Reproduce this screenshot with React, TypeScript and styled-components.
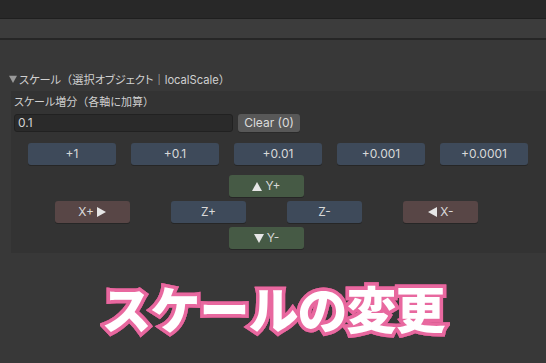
import React from "react";
import styled, { createGlobalStyle } from "styled-components";

const Global = createGlobalStyle`
  html, body { margin: 0; padding: 0; }
  body {
    width: 546px; height: 363px; overflow: hidden;
    background: #383838;
    font-family: "Inter", "Noto Sans CJK JP", sans-serif;
  }
`;

const Page = styled.div`
  width: 546px; height: 363px;
  display: flex; flex-direction: column;
`;

const TopBar = styled.div`
  height: 18px; background: #282828; border-bottom: 1px solid #1f1f1f;
`;

const Band = styled.div`
  height: 19px; background: #3c3c3c; border-bottom: 2px solid #262626;
`;

const Foldout = styled.div`
  margin-top: 31px; height: 16px; display: flex; align-items: center;
  padding-left: 9px; gap: 2px;
  color: #d0d0d0; font-size: 11.2px;
  font-feature-settings: "palt";
`;

const Bracket = styled.span`
  font-feature-settings: normal;
`;

const Panel = styled.div`
  margin-top: 4px; margin-left: 11px; height: 162px;
  background: #333333; display: flex; flex-direction: column;
  padding: 3px 0 0 3px; box-sizing: border-box;
`;

const Label = styled.div`
  height: 16px; line-height: 16px; color: #d0d0d0; font-size: 11px;
  font-feature-settings: "palt";
`;

const FieldRow = styled.div`
  margin-top: 3px; display: flex; align-items: center; gap: 5px;
`;

const Field = styled.div`
  width: 219px; height: 18px; box-sizing: border-box;
  background: #2a2a2a; border: 1px solid #212121; border-radius: 3px;
  color: #d4d4d4; font-size: 12px; line-height: 16px; padding-left: 3px;
`;

const SmallButton = styled.div`
  width: 62px; height: 18px; margin-top: 1px; box-sizing: border-box;
  background: #585858; border-radius: 3px; color: #dcdcdc;
  font-size: 12px; line-height: 18px; text-align: center;
  box-shadow: 0 1px 0 #2a2a2a;
`;

const StepRow = styled.div`
  margin-top: 11px; margin-left: 14px; display: flex; gap: 15px;
`;

type Tone = "blue" | "green" | "red";
const tones: Record<Tone, string> = {
  blue: "#3e4a5a",
  green: "#465a45",
  red: "#584646",
};

const Btn = styled.div<{ $tone: Tone; $w: number }>`
  width: ${(p) => p.$w}px; height: 22px; box-sizing: border-box;
  background: ${(p) => tones[p.$tone]}; border-radius: 3px;
  box-shadow: 0 1px 0 #262626;
  color: #d8d8d8; font-size: 12px; line-height: 22px; text-align: center;
  display: flex; align-items: center; justify-content: center; gap: 3px;
`;

const Cross = styled.div`
  margin-top: 10px; margin-left: 41px; width: 423px;
  display: flex; flex-direction: column; align-items: center; gap: 4px;
`;

const CrossRow = styled.div`
  width: 100%; display: flex; justify-content: space-between;
`;

const Tri = ({ dir, size = 10, color = "#e6e6e6" }: { dir: "up" | "down" | "left" | "right"; size?: number; color?: string }) => {
  const pts = {
    up: "0,10 5,1 10,10",
    down: "0,1 10,1 5,10",
    left: "10,0 10,10 1,5",
    right: "0,0 0,10 9,5",
  }[dir];
  return (
    <svg width={size} height={size} viewBox="0 0 10 10">
      <polygon points={pts} fill={color} />
    </svg>
  );
};

const Caption = styled.div`
  margin-top: 26px; text-align: center;
  font-family: "Noto Sans CJK JP", sans-serif; font-weight: 900;
  font-size: 50px; line-height: 56px; letter-spacing: -1px;
  color: #ffffff;
  -webkit-text-stroke: 7px #e8689f;
  paint-order: stroke fill;
  filter: drop-shadow(0 0 0.6px #b04a78) drop-shadow(0 0 0.6px #b04a78);
`;

export default function App() {
  return (
    <Page>
      <Global />
      <TopBar />
      <Band />
      <Foldout>
        <Tri dir="down" size={8} color="#9a9a9a" />
        <span>スケール<Bracket>（</Bracket>選択オブジェクト｜localScale<Bracket>）</Bracket></span>
      </Foldout>
      <Panel>
        <Label>スケール増分<Bracket>（</Bracket>各軸に加算<Bracket>）</Bracket></Label>
        <FieldRow>
          <Field>0.1</Field>
          <SmallButton>Clear (0)</SmallButton>
        </FieldRow>
        <StepRow>
          {["+1", "+0.1", "+0.01", "+0.001", "+0.0001"].map((t) => (
            <Btn key={t} $tone="blue" $w={88}>{t}</Btn>
          ))}
        </StepRow>
        <Cross>
          <Btn $tone="green" $w={75}><Tri dir="up" />Y+</Btn>
          <CrossRow>
            <Btn $tone="red" $w={75}>X+ <Tri dir="right" /></Btn>
            <Btn $tone="blue" $w={75}>Z+</Btn>
            <Btn $tone="blue" $w={75}>Z-</Btn>
            <Btn $tone="red" $w={75}><Tri dir="left" /> X-</Btn>
          </CrossRow>
          <Btn $tone="green" $w={75}><Tri dir="down" />Y-</Btn>
        </Cross>
      </Panel>
      <Caption>スケールの変更</Caption>
    </Page>
  );
}
